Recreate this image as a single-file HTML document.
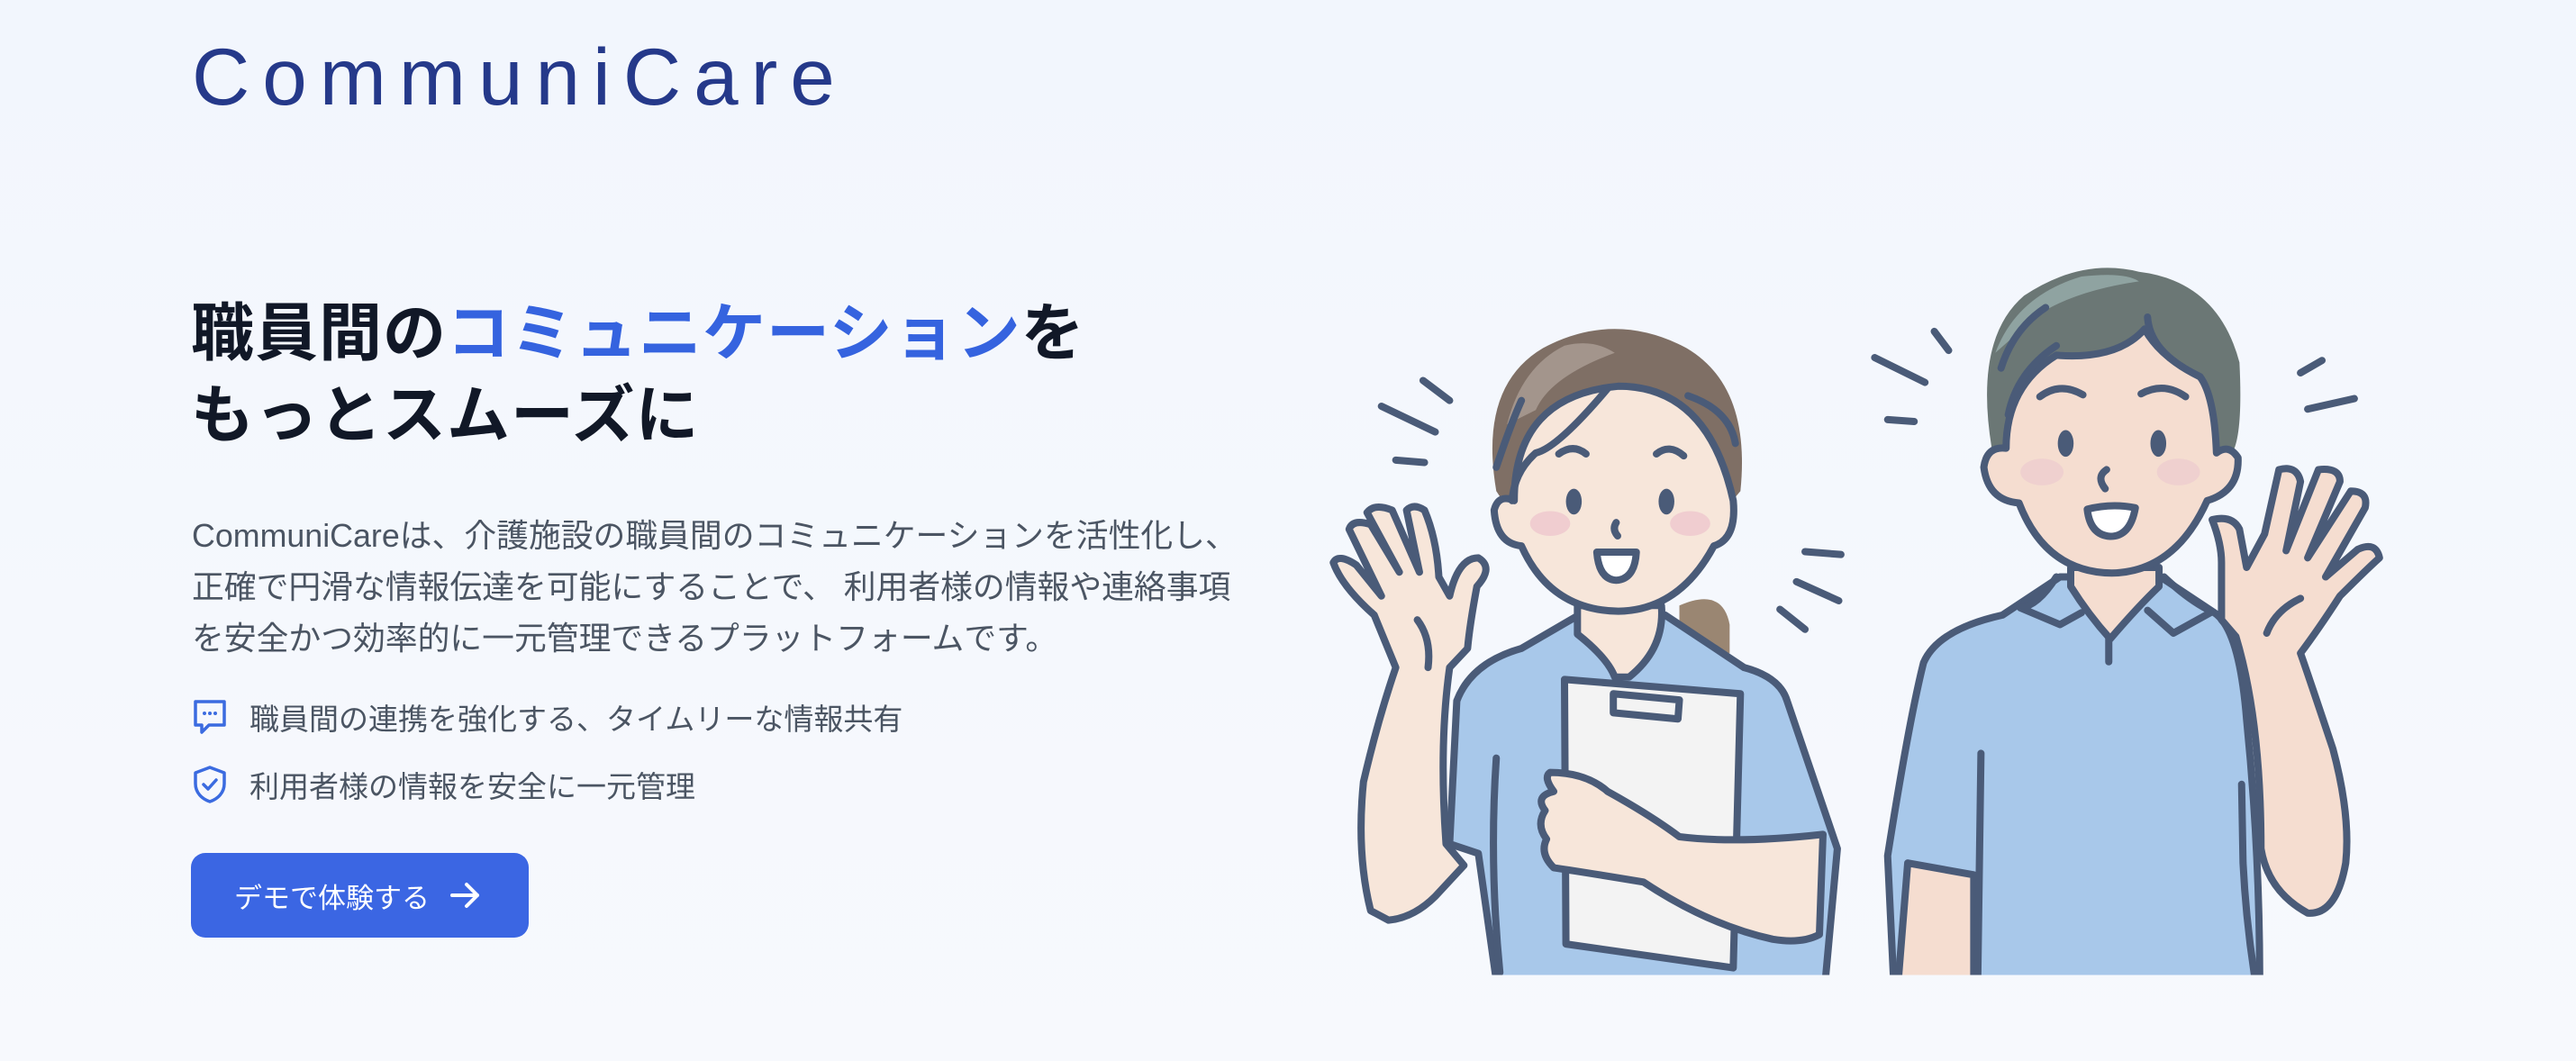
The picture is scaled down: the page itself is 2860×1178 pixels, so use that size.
<!DOCTYPE html>
<html><head><meta charset="utf-8"><style>
html,body{margin:0;padding:0}
body{width:2860px;height:1178px;overflow:hidden;position:relative;background:linear-gradient(180deg,#f2f6fd 0%,#f5f8fd 60%,#f7f9fd 100%);font-family:"Liberation Sans","Noto Sans CJK JP",sans-serif}
.logo{position:absolute;left:213px;top:30px;font-size:89px;letter-spacing:14px;color:#25398a;font-weight:400;line-height:110px}
h1{position:absolute;left:212px;top:325px;margin:0;font-size:70px;line-height:91px;font-weight:700;color:#111827;letter-spacing:1px}
h1 .b{color:#3563df}
.p{position:absolute;left:213px;top:567px;font-size:35.8px;line-height:57px;color:#4b5563;width:1300px;white-space:nowrap}
.li{position:absolute;left:213px;font-size:33px;color:#4b5563;display:flex;align-items:center}
.li svg{margin-right:24px}
.btn{position:absolute;left:212px;top:947px;width:375px;height:94px;background:#3b66e3;border-radius:16px;color:#fff;font-size:31px;display:flex;align-items:center;padding-left:48px;box-sizing:border-box}
.btn svg{margin-left:22px}
svg.ill{position:absolute;left:1450px;top:270px}
</style></head><body>
<div class="logo">CommuniCare</div>
<h1>職員間の<span class="b">コミュニケーション</span>を<br>もっとスムーズに</h1>
<div class="p">CommuniCareは、介護施設の職員間のコミュニケーションを活性化し、<br>正確で円滑な情報伝達を可能にすることで、 利用者様の情報や連絡事項<br>を安全かつ効率的に一元管理できるプラットフォームです。</div>
<div class="li" style="top:772px"><svg width="40" height="42" viewBox="0 0 40 42"><path d="M4 4h32v26H19l-8 8v-8H4z" fill="none" stroke="#3b6be0" stroke-width="3.5" stroke-linejoin="round"/><circle cx="14" cy="17" r="2" fill="#3b6be0"/><circle cx="20" cy="17" r="2" fill="#3b6be0"/><circle cx="26" cy="17" r="2" fill="#3b6be0"/></svg>職員間の連携を強化する、タイムリーな情報共有</div>
<div class="li" style="top:847px"><svg width="40" height="44" viewBox="0 0 40 44"><path d="M20 3L36 9v12c0 10-7 17-16 20C11 38 4 31 4 21V9z" fill="none" stroke="#3b6be0" stroke-width="3.5" stroke-linejoin="round"/><path d="M13 22l5 5 9-10" fill="none" stroke="#3b6be0" stroke-width="3.5" stroke-linecap="round" stroke-linejoin="round"/></svg>利用者様の情報を安全に一元管理</div>
<div class="btn">デモで体験する<svg width="36" height="32" viewBox="0 0 36 32"><path d="M3 16h28M19 4l12 12-12 12" fill="none" stroke="#fff" stroke-width="4" stroke-linecap="round" stroke-linejoin="round"/></svg></div>

<svg class="ill" width="1250" height="830" viewBox="0 0 1568 1568" preserveAspectRatio="none">
<defs><clipPath id="c"><rect x="0" y="0" width="1568" height="1535"/></clipPath></defs>
<g clip-path="url(#c)" stroke="#4a5b78" stroke-width="8" stroke-linecap="round" stroke-linejoin="round">
<path d="M520 760 Q580 720 590 800 L590 860 L520 860Z" fill="#9a8672" stroke="none"/>
<path d="M265 520 Q240 300 330 220 Q430 140 530 220 Q620 300 605 520 L560 600 L300 600Z" fill="#7f6f65" stroke="none"/>
<path d="M280 380 Q300 260 360 215 Q400 200 430 230 Q340 280 320 350Z" fill="#a3958c" stroke="none"/>
<path d="M210 960 Q230 880 300 850 L380 780 L500 780 L610 890 Q660 910 670 960 L740 1270 L720 1600 L270 1600 L240 1280 L200 1260Z" fill="#a8c8ea" vector-effect="non-scaling-stroke"/>
<path d="M378 760 L378 820 Q420 870 430 910 L450 910 Q500 850 495 760Z" fill="#f7e6da" vector-effect="non-scaling-stroke"/>
<path d="M435 300 Q560 300 595 540 Q600 620 568 635 Q520 770 435 772 Q340 770 300 635 Q265 630 262 560 Q268 525 290 540 Q290 320 435 300Z" fill="#f7e6da" vector-effect="non-scaling-stroke"/>
<path d="M265 470 Q285 380 300 330 M420 305 Q350 430 320 440 Q290 480 287 540 M532 320 Q590 350 598 420" fill="none" vector-effect="non-scaling-stroke"/>
<ellipse cx="340" cy="588" rx="28" ry="26" fill="#f0cdd0" stroke="none"/><ellipse cx="535" cy="588" rx="28" ry="26" fill="#f0cdd0" stroke="none"/>
<ellipse cx="373" cy="542" rx="11" ry="27" fill="#4a5b78" stroke="none"/><ellipse cx="502" cy="542" rx="11" ry="27" fill="#4a5b78" stroke="none"/>
<path d="M352 442 Q372 420 390 442 M488 442 Q506 420 526 446 M432 586 Q426 600 434 614" fill="none" vector-effect="non-scaling-stroke"/>
<path d="M405 648 L460 648 Q458 705 432 707 Q408 705 405 648Z" fill="#fff" vector-effect="non-scaling-stroke"/>
<path d="M360 915 L605 945 L595 1520 L362 1470Z" fill="#f3f3f3" vector-effect="non-scaling-stroke"/>
<path d="M428 945 L520 958 L518 998 L428 985Z" fill="none" vector-effect="non-scaling-stroke"/>
<path d="M90 1400 Q70 1280 80 1130 Q100 1000 125 890 L95 780 Q50 720 38 670 Q45 650 70 675 L105 740 L60 600 Q65 578 90 590 L130 690 L85 565 Q95 545 120 560 L158 690 L140 560 Q150 545 165 560 Q182 620 185 700 L200 740 Q212 660 240 660 Q262 680 238 720 Q228 800 225 850 L200 890 Q185 1050 195 1260 L220 1305 L180 1370 Q150 1415 115 1420Z" fill="#f7e6da" vector-effect="non-scaling-stroke"/>
<path d="M340 1110 Q390 1110 420 1150 Q480 1200 520 1245 Q600 1260 720 1240 L715 1450 Q690 1470 650 1460 Q560 1430 470 1340 Q390 1320 345 1310 Q325 1280 335 1250 Q320 1220 333 1190 Q318 1160 345 1150 Q330 1120 340 1110Z" fill="#f7e6da" vector-effect="non-scaling-stroke"/>
<path d="M155 790 Q175 830 170 890 M265 1080 Q255 1300 270 1530" fill="none" vector-effect="non-scaling-stroke"/>
<path d="M820 1600 L810 1285 Q840 1000 860 880 Q880 810 970 780 L1050 700 L1190 700 L1265 775 Q1300 810 1310 1000 Q1330 1300 1328 1600Z" fill="#a8c8ea" vector-effect="non-scaling-stroke"/>
<path d="M838 1300 L930 1325 L930 1600 L822 1600Z" fill="#f5ddd0" vector-effect="non-scaling-stroke"/>
<path d="M1065 680 L1065 720 Q1090 780 1120 830 Q1160 760 1188 720 L1188 680Z" fill="#f5ddd0" vector-effect="non-scaling-stroke"/>
<path d="M955 430 Q930 200 1000 110 Q1080 30 1160 60 Q1270 80 1300 250 Q1305 400 1290 440 L1260 460 L960 460Z" fill="#6b7775" stroke="none"/>
<path d="M960 230 Q990 110 1080 70 Q1140 60 1160 80 Q1070 100 1020 150Z" fill="#8fa3a1" stroke="none"/>
<path d="M1045 235 Q1130 245 1168 180 Q1190 240 1245 280 Q1265 320 1268 440 Q1285 420 1298 450 Q1300 520 1255 540 Q1210 690 1122 692 Q1030 690 993 545 Q950 540 944 470 Q948 425 975 430 Q975 300 1045 235Z" fill="#f5ddd0" vector-effect="non-scaling-stroke"/>
<path d="M968 262 Q985 180 1030 135 M1172 155 Q1175 230 1245 280 M1045 215 Q990 270 978 360" fill="none" vector-effect="non-scaling-stroke"/>
<ellipse cx="1025" cy="480" rx="30" ry="28" fill="#efd0cf" stroke="none"/><ellipse cx="1215" cy="480" rx="30" ry="28" fill="#efd0cf" stroke="none"/>
<ellipse cx="1058" cy="420" rx="11" ry="28" fill="#4a5b78" stroke="none"/><ellipse cx="1187" cy="420" rx="11" ry="28" fill="#4a5b78" stroke="none"/>
<path d="M1022 322 Q1050 290 1082 318 M1163 316 Q1195 290 1225 322 M1115 475 Q1100 490 1113 515" fill="none" vector-effect="non-scaling-stroke"/>
<path d="M1088 558 Q1122 545 1155 555 Q1148 615 1120 615 Q1092 612 1088 558Z" fill="#fff" vector-effect="non-scaling-stroke"/>
<path d="M1045 700 Q1020 760 995 765 L1050 800 L1080 775 M1195 700 Q1230 750 1262 773 L1208 818 L1172 770 M1118 830 L1118 878 M940 1070 L935 1600 M1303 1135 L1305 1300 Q1310 1450 1328 1600" fill="none" vector-effect="non-scaling-stroke"/>
<path d="M1295 825 Q1330 1000 1330 1270 Q1340 1360 1395 1405 Q1435 1410 1448 1300 Q1455 1200 1430 1060 Q1390 880 1385 860 Q1410 810 1440 740 Q1480 680 1495 660 Q1490 625 1465 642 L1420 700 L1475 555 Q1480 520 1455 520 L1395 660 L1440 500 Q1440 470 1410 475 L1365 645 L1385 500 Q1380 465 1355 475 L1335 610 L1310 680 L1300 600 Q1290 570 1262 580 Q1275 630 1275 670 L1275 790Z" fill="#f5ddd0" vector-effect="non-scaling-stroke"/>
<path d="M1338 818 Q1350 770 1385 745" fill="none" vector-effect="non-scaling-stroke"/>
<path d="M163 288 L200 330 M105 342 L180 396 M125 455 L165 460 M695 647 L745 653 M683 710 L742 750 M660 768 L695 810 M875 185 L895 225 M792 240 L862 292 M810 370 L847 374 M1385 272 L1415 246 M1395 348 L1460 326" fill="none" vector-effect="non-scaling-stroke"/>
</g>
</svg>
</body></html>
